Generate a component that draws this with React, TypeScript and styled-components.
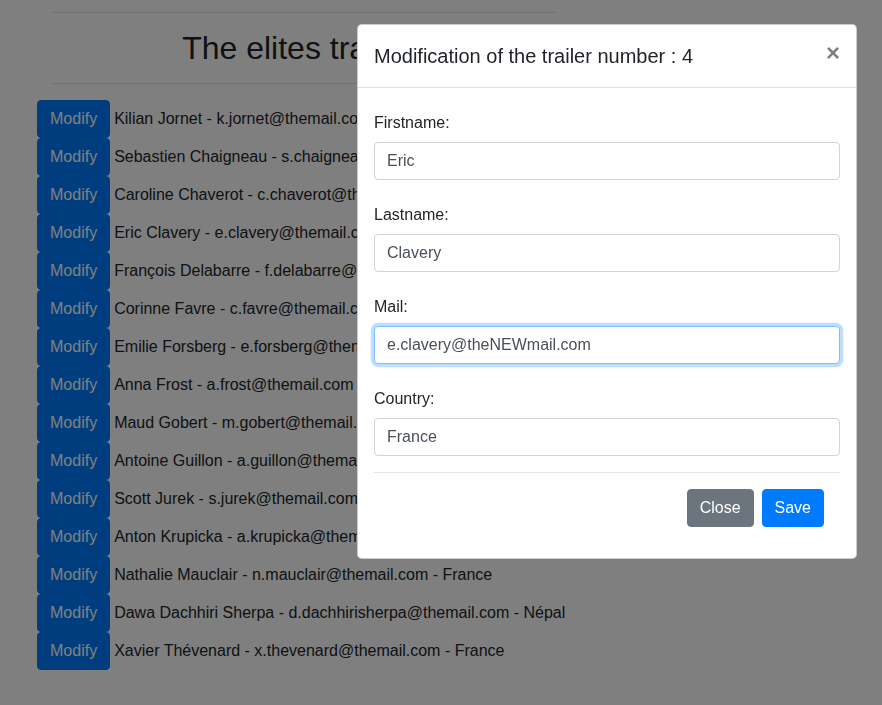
import React from "react";
import styled, { createGlobalStyle } from "styled-components";

const GlobalStyle = createGlobalStyle`
  html, body { margin: 0; padding: 0; background: #fff; }
  body {
    font-family: "Liberation Sans", Arial, Helvetica, sans-serif;
    font-size: 16px;
    line-height: 1.5;
    color: #212529;
  }
  * { box-sizing: border-box; }
`;

const Page = styled.div`
  padding: 12px 0 30px 37px;
`;

const HeaderBlock = styled.header`
  margin-left: 15px;
  width: 504px;
`;

const Rule = styled.hr`
  margin: 0;
  border: 0;
  border-top: 1px solid rgba(0, 0, 0, 0.1);
`;

const Title = styled.h2`
  margin: 16px 0;
  font-size: 32px;
  font-weight: 500;
  line-height: 1.2;
  text-align: center;
`;

const List = styled.ul`
  list-style: none;
  margin: 16px 0 0;
  padding: 0;
  display: flex;
  flex-direction: column;
`;

const Row = styled.li`
  display: flex;
  align-items: center;
  gap: 4px;
  height: 38px;
  white-space: nowrap;
`;

const Btn = styled.button<{ $variant: "primary" | "secondary" }>`
  font-family: inherit;
  font-size: 16px;
  line-height: 1.5;
  padding: 6px 12px;
  border-radius: 4px;
  border: 1px solid ${(p) => (p.$variant === "primary" ? "#007bff" : "#6c757d")};
  background: ${(p) => (p.$variant === "primary" ? "#007bff" : "#6c757d")};
  color: #fff;
  cursor: pointer;
  height: 38px;
`;

const Backdrop = styled.div`
  position: fixed;
  inset: 0;
  background: rgba(0, 0, 0, 0.5);
`;

const Modal = styled.div`
  position: fixed;
  top: 24px;
  left: 357px;
  width: 500px;
  background: #fff;
  border: 1px solid rgba(0, 0, 0, 0.2);
  border-radius: 4.8px;
  display: flex;
  flex-direction: column;
`;

const ModalHeader = styled.div`
  display: flex;
  align-items: flex-start;
  justify-content: space-between;
  padding: 16px;
  border-bottom: 1px solid #dee2e6;
`;

const ModalTitle = styled.h5`
  margin: 0;
  font-size: 20px;
  font-weight: 500;
  line-height: 1.5;
  color: #212529;
`;

const CloseX = styled.button`
  background: transparent;
  border: 0;
  padding: 16px;
  margin: -16px -16px -16px auto;
  font-family: inherit;
  font-size: 24px;
  font-weight: 700;
  line-height: 1;
  color: #000;
  opacity: 0.5;
  text-shadow: 0 1px 0 #fff;
  cursor: pointer;
`;

const ModalBody = styled.div`
  padding: 16px 16px 0;
`;

const Group = styled.div`
  margin-bottom: 16px;
`;

const Label = styled.label`
  display: block;
  padding-top: 7px;
  margin-bottom: 7px;
  font-size: 16px;
  line-height: 24px;
`;

const Input = styled.input<{ $focus?: boolean }>`
  display: block;
  width: 100%;
  height: 38px;
  padding: 6px 12px;
  font-family: inherit;
  font-size: 16px;
  line-height: 1.5;
  color: #495057;
  background: #fff;
  border: 1px solid ${(p) => (p.$focus ? "#80bdff" : "#ced4da")};
  border-radius: 4px;
  outline: 0;
  box-shadow: ${(p) => (p.$focus ? "0 0 0 3.2px rgba(0, 123, 255, 0.25)" : "none")};
`;

const Footer = styled.div`
  display: flex;
  justify-content: flex-end;
  gap: 8px;
  padding: 16px 16px 31px 0;
`;

const trailers = [
  "Kilian Jornet - k.jornet@themail.com - Espagne",
  "Sebastien Chaigneau - s.chaigneau@themail.com - France",
  "Caroline Chaverot - c.chaverot@themail.com - France",
  "Eric Clavery - e.clavery@themail.com - France",
  "François Delabarre - f.delabarre@themail.com - France",
  "Corinne Favre - c.favre@themail.com - France",
  "Emilie Forsberg - e.forsberg@themail.com - Suède",
  "Anna Frost - a.frost@themail.com - Nouvelle-Zélande",
  "Maud Gobert - m.gobert@themail.com - France",
  "Antoine Guillon - a.guillon@themail.com - France",
  "Scott Jurek - s.jurek@themail.com - USA",
  "Anton Krupicka - a.krupicka@themail.com - USA",
  "Nathalie Mauclair - n.mauclair@themail.com - France",
  "Dawa Dachhiri Sherpa - d.dachhirisherpa@themail.com - Népal",
  "Xavier Thévenard - x.thevenard@themail.com - France",
];

const fields = [
  { label: "Firstname:", value: "Eric" },
  { label: "Lastname:", value: "Clavery" },
  { label: "Mail:", value: "e.clavery@theNEWmail.com", focus: true },
  { label: "Country:", value: "France" },
];

export default function App() {
  return (
    <>
      <GlobalStyle />
      <Page>
        <HeaderBlock>
          <Rule />
          <Title>The elites trailers</Title>
          <Rule />
        </HeaderBlock>
        <List>
          {trailers.map((t) => (
            <Row key={t}>
              <Btn $variant="primary">Modify</Btn>
              <span>{t}</span>
            </Row>
          ))}
        </List>
      </Page>
      <Backdrop />
      <Modal>
        <ModalHeader>
          <ModalTitle>Modification of the trailer number : 4</ModalTitle>
          <CloseX aria-label="Close">×</CloseX>
        </ModalHeader>
        <ModalBody>
          {fields.map((f) => (
            <Group key={f.label}>
              <Label>{f.label}</Label>
              <Input $focus={f.focus} defaultValue={f.value} readOnly />
            </Group>
          ))}
          <Rule />
          <Footer>
            <Btn $variant="secondary">Close</Btn>
            <Btn $variant="primary">Save</Btn>
          </Footer>
        </ModalBody>
      </Modal>
    </>
  );
}
